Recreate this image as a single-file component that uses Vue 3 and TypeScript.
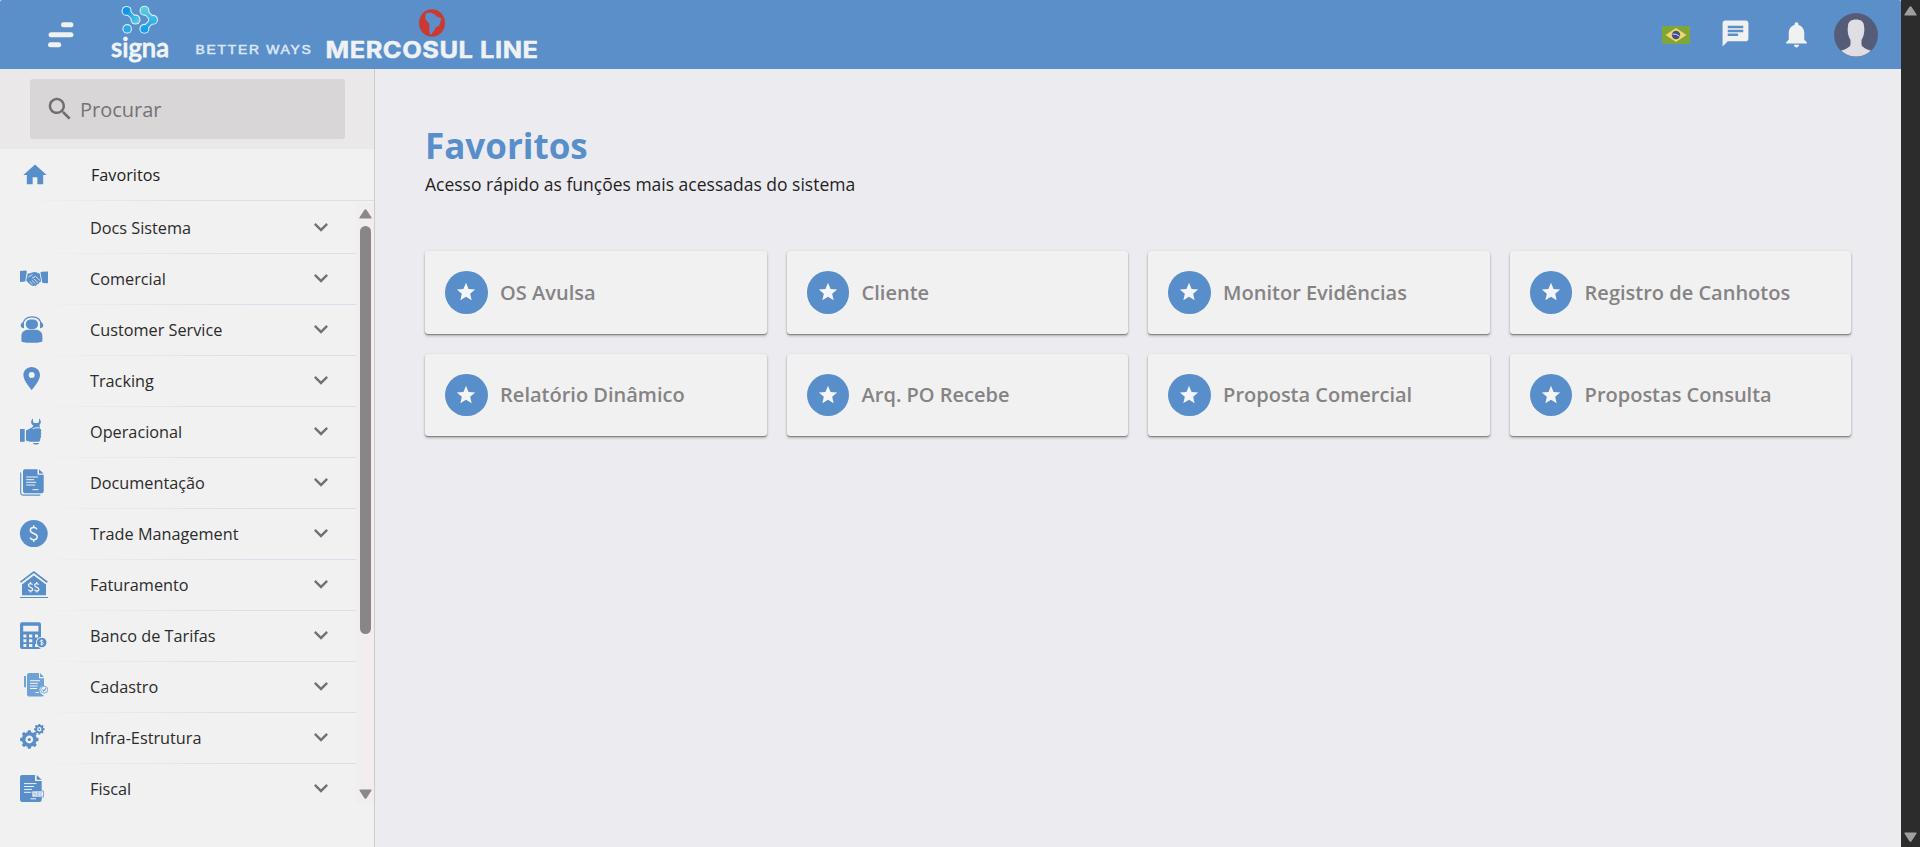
<script setup lang="ts">
interface MenuItem {
  id: string
  label: string
}

const menu: MenuItem[] = [
  { id: 'docs', label: 'Docs Sistema' },
  { id: 'comercial', label: 'Comercial' },
  { id: 'customer', label: 'Customer Service' },
  { id: 'tracking', label: 'Tracking' },
  { id: 'operacional', label: 'Operacional' },
  { id: 'documentacao', label: 'Documentação' },
  { id: 'trade', label: 'Trade Management' },
  { id: 'faturamento', label: 'Faturamento' },
  { id: 'banco', label: 'Banco de Tarifas' },
  { id: 'cadastro', label: 'Cadastro' },
  { id: 'infra', label: 'Infra-Estrutura' },
  { id: 'fiscal', label: 'Fiscal' },
]

const favorites: string[] = [
  'OS Avulsa',
  'Cliente',
  'Monitor Evidências',
  'Registro de Canhotos',
  'Relatório Dinâmico',
  'Arq. PO Recebe',
  'Proposta Comercial',
  'Propostas Consulta',
]

const bigTeeth: number[] = [0, 45, 90, 135, 180, 225, 270, 315]
</script>

<template>
  <div class="window">
    <div class="app">
      <header class="topbar">
        <svg class="burger" width="26" height="26" viewBox="0 0 26 26">
          <rect x="13" y="0.3" width="12.4" height="5" rx="2.5" />
          <rect x="0.6" y="10.3" width="24.8" height="5" rx="2.5" />
          <rect x="0" y="20.2" width="13.2" height="5" rx="2.5" />
        </svg>

        <svg class="brand" width="460" height="69" viewBox="100 0 460 69">
          <defs>
            <linearGradient id="dotA" gradientUnits="userSpaceOnUse" x1="124" y1="9" x2="138" y2="22">
              <stop offset="0.2" stop-color="#0f93ee" />
              <stop offset="1" stop-color="#5acbe0" />
            </linearGradient>
            <linearGradient id="dotB" gradientUnits="userSpaceOnUse" x1="148" y1="7" x2="148" y2="33">
              <stop offset="0.1" stop-color="#5ccbdc" />
              <stop offset="0.9" stop-color="#139bf0" />
            </linearGradient>
          </defs>
          <g fill="#d9ecfa">
            <circle cx="126.600" cy="10.900" r="5" />
            <circle cx="135.500" cy="19.600" r="5" />
            <circle cx="127.200" cy="28.900" r="4.800" />
            <circle cx="144.500" cy="10.700" r="5" />
            <circle cx="153" cy="19.800" r="5" />
            <circle cx="144.400" cy="28.800" r="5" />
            <path d="M126.600 10.900L135.500 19.600M144.500 10.700L153 19.800L144.400 28.800" fill="none" stroke="#d9ecfa" stroke-width="5.600" />
          </g>
          <g fill="url(#dotA)">
            <circle cx="126.600" cy="10.900" r="3.900" />
            <circle cx="135.500" cy="19.600" r="3.900" />
            <path d="M126.600 10.900L135.500 19.600" fill="none" stroke="url(#dotA)" stroke-width="3.600" />
          </g>
          <circle cx="127.200" cy="28.900" r="3.700" fill="#2ba8ea" />
          <g fill="url(#dotB)">
            <circle cx="144.500" cy="10.700" r="3.900" />
            <circle cx="153" cy="19.800" r="3.900" />
            <circle cx="144.400" cy="28.800" r="3.900" />
            <path d="M144.500 10.700L153 19.800L144.400 28.800" fill="none" stroke="url(#dotB)" stroke-width="3.600" />
          </g>
          <text class="signa" x="111" y="56.500" textLength="58" lengthAdjust="spacingAndGlyphs">signa</text>
          <text class="tagline" x="195.500" y="54.300" textLength="117" lengthAdjust="spacingAndGlyphs">BETTER WAYS</text>
          <ellipse cx="432" cy="23" rx="13" ry="13.800" fill="#cb3a32" />
          <path fill="#5a8fca" d="M425.800 13.400l4.200-.8 5 2 1.500 1.800 5 2-1.300 4.300-.9 2.800-3.500 1.900-1.700 3.200-3 3.800-1.200-.2-.6-4.400v-6l-3.700-4.200-.4-3.200z" />
          <text class="company" x="325.500" y="58.300" textLength="213" lengthAdjust="spacingAndGlyphs">MERCOSUL LINE</text>
        </svg>

        <div class="actions">
          <svg class="flag" width="28" height="18" viewBox="0 0 28 18">
            <rect width="28" height="18" fill="#7fa637" />
            <path d="M14 2l10.500 7L14 16 3.500 9z" fill="#f2d76a" />
            <circle cx="14" cy="9" r="4.200" fill="#434c8c" />
            <path d="M10.300 8q4.200-.4 7.300 2.300" fill="none" stroke="#d9dce8" stroke-width="1" />
          </svg>
          <svg class="chat" width="31" height="31" viewBox="0 0 24 24">
            <path fill="#f1f1f2" d="M20 2H4c-1.100 0-1.990.9-1.990 2L2 22l4-4h14c1.100 0 2-.9 2-2V4c0-1.100-.9-2-2-2zM6 9h12v2H6V9zm8 5H6v-2h8v2zm4-6H6V6h12v2z" />
          </svg>
          <svg class="bell" width="31" height="31" viewBox="0 0 24 24">
            <path fill="#f1f1f2" d="M12 22c1.100 0 2-.9 2-2h-4c0 1.100.89 2 2 2zm6-6v-5c0-3.070-1.640-5.640-4.500-6.320V4c0-.83-.67-1.500-1.500-1.500s-1.500.67-1.500 1.500v.68C7.630 5.360 6 7.920 6 11v5l-2 2v1h16v-1l-2-2z" />
          </svg>
          <svg class="avatar" width="44" height="44" viewBox="0 0 44 44">
            <defs>
              <clipPath id="face"><circle cx="22" cy="22" r="21.600" /></clipPath>
            </defs>
            <circle cx="22" cy="22" r="21.900" fill="#565b78" />
            <g clip-path="url(#face)" fill="#dfdfe3">
              <path d="M14 13c0-4.500 3.500-6.500 8-6.500s8 2 8 6.500c.8 4.500.3 9.500-2.500 14v4.500c.3 2.500 3.500 4.300 10.500 6.500v8H6v-8c7-2.200 10-4 10.500-6.500V27C13.700 22.500 13.200 17.500 14 13z" />
            </g>
          </svg>
        </div>
      </header>

      <div class="body">
        <aside class="sidebar">
          <div class="search-area">
            <div class="search">
              <svg width="30" height="30" viewBox="0 0 24 24">
                <path fill="#706e6f" d="M15.500 14h-.79l-.28-.27C15.410 12.590 16 11.110 16 9.500 16 5.910 13.090 3 9.500 3S3 5.910 3 9.500 5.910 16 9.500 16c1.610 0 3.090-.59 4.230-1.570l.27.28v.79l5 4.990L20.490 19l-4.990-5zm-6 0C7.010 14 5 11.990 5 9.500S7.010 5 9.500 5 14 7.010 14 9.500 11.990 14 9.500 14z" />
              </svg>
              <span>Procurar</span>
            </div>
          </div>

          <div class="home-row">
            <svg width="28" height="28" viewBox="0 0 24 24">
              <path fill="#588eca" d="M10 20v-6h4v6h5v-8h3L12 3 2 12h3v8z" />
            </svg>
            <span>Favoritos</span>
          </div>

          <div class="scroller">
            <nav class="list">
              <div v-for="item in menu" :key="item.id" class="item">
                <svg class="icon" width="28" height="28" viewBox="0 0 28 28" fill="#588eca">
                  <g v-if="item.id === 'comercial'">
                    <path d="M0 6l6-.5.8 1L5.200 16.600 0 17zM28 6.600l-6.400.2-1.200.8 2 10.300 5.600.3z" />
                    <path d="M7.700 8.600c2.200 0 3.700-1.400 6.300-1.700 2.700-.2 4 1.200 5.600 1.500l1.600 7.600c-.3 1.200-1 1.500-1.900 1.300 0 1.600-1.300 2.200-2.300 1.700-.2 1.600-1.600 2.100-2.700 1.500-1 1-2.300.6-3-.2L9 18.500l-2.800-3z" />
                    <path d="M8.200 12.200l4.300-2.800M12 13l3.400-1.700 5 4.500M13.700 13.800l4.500 4M11.800 15.200l3.800 3.700M9.800 16.600l2.900 2.700" fill="none" stroke="#f1f1f1" stroke-width=".8" />
                  </g>
                  <g v-else-if="item.id === 'customer'">
                    <rect x="5.800" y="3.400" width="12.200" height="9.800" rx="4.900" />
                    <path d="M1.400 27V20c0-4 3-6.300 7-6.300h7c4 0 7 2.300 7 6.300v5.200c-2 2.200-19 2.200-21 0z" />
                    <path d="M3 9C3 3.800 6.600.9 12 .9S21 3.800 21 9" fill="none" stroke="#588eca" stroke-width="1.200" />
                    <path d="M4 5.500v6.700c-4.400 0-4.500-5.300 0-6.700zM20 5.500v6.700c4.400 0 4.500-5.300 0-6.700z" />
                  </g>
                  <path v-else-if="item.id === 'tracking'" fill-rule="evenodd" d="M11.700 0C7 0 3.400 3.600 3.400 8.200c0 5.600 8.300 14.800 8.300 14.800S20 13.800 20 8.200C20 3.600 16.400 0 11.700 0zm0 4.900a3 3 0 1 1 0 6 3 3 0 0 1 0-6z" />
                  <g v-else-if="item.id === 'operacional'">
                    <rect x="0" y="11" width="4.700" height="12.800" />
                    <path d="M6 12.600l5.500-2.800c1-.6 1.600-1.400 2-2.300h6.500c-.2 1.200-.3 2-.2 2.900 1.800.6 1.900 2.700.8 3.500 1 1 .8 2.600-.1 3.200 1 1 .7 2.700-.3 3.300.4 1.800-.4 3.300-1.900 3.300H10L6 22.500z" />
                    <path d="M13 .4c-2.500 1.800-2.600 5.400.5 7.100v1.500h5V7.500c3.100-1.700 3-5.300.5-7.100v3.800l-1.700.9h-2.600L13 4.200z" />
                    <path d="M12.600 10.600c1 .5 1.800-.6 2.600-.8h4.300" fill="none" stroke="#f1f1f1" stroke-width="1" />
                    <path d="M13 25h6c-.4 2-5.600 2-6 0z" />
                  </g>
                  <g v-else-if="item.id === 'documentacao'">
                    <path d="M5 .3h12.500v5.500h6.200v16.400a2 2 0 0 1-2 2H5a2 2 0 0 1-2-2V2.300a2 2 0 0 1 2-2zM19 .3l4.500 4.200H19z" />
                    <path d="M.7 3.500v20.200a2.400 2.400 0 0 0 2.400 2.400h17.200" fill="none" stroke="#588eca" stroke-width="1.100" />
                    <path d="M6.200 8h12M6.200 10.700h8M6.200 13.300h10M6.200 16h9M12.500 20.700h6" stroke="#f1f1f1" stroke-width="1" />
                  </g>
                  <g v-else-if="item.id === 'trade'">
                    <ellipse cx="13.800" cy="13.600" rx="13.900" ry="13.500" />
                    <path d="M17 9.400c-.7-1.300-1.900-1.800-3.300-1.800-2 0-3.400 1.100-3.400 2.700 0 4 7 2.400 7 6.500 0 1.700-1.500 2.900-3.600 2.900-1.700 0-3-.7-3.700-2.100M13.700 5.300v2.600M13.700 19.300v2.600" fill="none" stroke="#f1f1f1" stroke-width="1.500" />
                  </g>
                  <g v-else-if="item.id === 'faturamento'">
                    <path d="M.5 11.200L13.800 1 27.300 11.200" fill="none" stroke="#588eca" stroke-width="1.700" />
                    <path d="M13.800 4.400L26 13.500v10.800H2V13.500zM0 26h28v1.100H0z" />
                    <g fill="none" stroke="#f1f1f1" stroke-width="1.300">
                      <path d="M12.500 13.800c-.4-.9-1.100-1.200-2-1.200-1.200 0-2 .7-2 1.700 0 2.500 4.200 1.500 4.200 4 0 1.100-.9 1.700-2.100 1.700-1.100 0-1.900-.5-2.200-1.400M10.500 11v2M10.500 19.800v1.800" />
                      <path d="M18.700 13.800c-.4-.9-1.100-1.200-2-1.200-1.200 0-2 .7-2 1.700 0 2.500 4.200 1.500 4.200 4 0 1.100-.9 1.700-2.100 1.700-1.100 0-1.900-.5-2.200-1.400M16.700 11v2M16.700 19.800v1.800" />
                    </g>
                  </g>
                  <g v-else-if="item.id === 'banco'">
                    <rect x="0" y=".3" width="21" height="26.700" rx="2" />
                    <path fill="#f1f1f1" d="M3.200 3.800h15.200v5.700H3.200zM3.400 12.500h3v3h-3zM9 12.500h3.300v3H9zM15 12.500h3v3h-3zM3.400 17.300h3v3h-3zM9 17.300h3.300v3H9zM3.400 22h3v3h-3zM9 22h3.300v3H9zM15 22h3v3h-3z" />
                    <circle cx="21.700" cy="20.500" r="5.700" fill="#f1f1f1" />
                    <circle cx="21.700" cy="20.500" r="4.800" />
                    <path d="M23.200 19c-.7-1-3-.9-3 .3 0 1.300 3.200.8 3.200 2.200 0 1.300-2.700 1.400-3.300.3M21.700 17.500v6" fill="none" stroke="#f1f1f1" stroke-width=".9" />
                  </g>
                  <g v-else-if="item.id === 'cadastro'" fill="#6fa2d6">
                    <path d="M9 0h10v5.300h5V13c-6 .5-6 7 0 9.800-.4.400-1 .6-1.500.6H9a2 2 0 0 1-2-2V2a2 2 0 0 1 2-2zM20 0l4 4h-4zM4 3h2v10.500l-1 1.500-1-1.500z" />
                    <path d="M10 7.700h10M10 10.300h8M10 13h7.500M10 15.500h7M15.500 19.500h3.500" stroke="#f1f1f1" stroke-width="1" />
                    <circle cx="24.200" cy="16.700" r="3.500" fill="#f1f1f1" stroke="#6fa2d6" stroke-width=".9" />
                    <path d="M22.500 16.700l1.300 1.300 2.300-2.600" fill="none" stroke="#6fa2d6" stroke-width="1.200" />
                  </g>
                  <g v-else-if="item.id === 'infra'">
                    <g transform="translate(9.300 15.500)">
                      <rect v-for="a in bigTeeth" :key="a" x="-1.700" y="-9.200" width="3.400" height="4" rx=".8" :transform="`rotate(${a})`" />
                      <circle r="5.700" fill="none" stroke="#588eca" stroke-width="3.600" />
                      <circle r="1.600" />
                    </g>
                    <g transform="translate(19.300 5.200)">
                      <rect v-for="a in bigTeeth" :key="a" x="-1" y="-5.300" width="2" height="2.500" rx=".5" :transform="`rotate(${a})`" />
                      <circle r="3.200" fill="none" stroke="#588eca" stroke-width="2" />
                      <circle r=".9" />
                    </g>
                  </g>
                  <g v-else-if="item.id === 'fiscal'">
                    <path d="M2 0h13v6h6.700v18.800a2.200 2.200 0 0 1-2.200 2.200H2.200A2.200 2.200 0 0 1 0 24.800V2a2 2 0 0 1 2-2zM16.700 0l5 4.700h-5z" />
                    <path d="M4 8.600h12.500M4 11.500h10M4 14.400h8M4 17.300h7.500M10.500 23.800H16" stroke="#f1f1f1" stroke-width="1" />
                    <rect x="12" y="16" width="11.600" height="6" fill="#f1f1f1" stroke="#588eca" stroke-width=".7" />
                    <path d="M14 20.500v-3l2 3v-3M17.500 20.500v-3h1.500v3zM22 17.700h-1.300v2.800H22" fill="none" stroke="#8db2dc" stroke-width=".7" />
                  </g>
                </svg>
                <span class="label">{{ item.label }}</span>
                <svg class="chevron" width="28" height="28" viewBox="0 0 24 24">
                  <path fill="#737273" d="M7.410 8.590L12 13.170l4.590-4.580L18 10l-6 6-6-6z" />
                </svg>
              </div>
            </nav>
            <div class="track">
              <svg width="13" height="10" viewBox="0 0 13 10"><path d="M1 9.500Q0 9.500.6 8.200L5.500.8q1-1.100 2 0l4.900 7.400q.6 1.300-.4 1.300z" fill="#8a8888" /></svg>
              <div class="thumb"></div>
              <svg width="13" height="10" viewBox="0 0 13 10"><path d="M1 .5Q0 .5.600 1.800l4.900 7.400q1 1.100 2 0l4.900-7.400Q13 .5 12 .5z" fill="#8a8888" /></svg>
            </div>
          </div>
        </aside>

        <main class="content">
          <h1>Favoritos</h1>
          <p>Acesso rápido as funções mais acessadas do sistema</p>
          <div class="grid">
            <div v-for="name in favorites" :key="name" class="card">
              <span class="badge">
                <svg width="22" height="22" viewBox="0 0 24 24">
                  <path fill="#f4f5f7" d="M12 17.270L18.180 21l-1.640-7.030L22 9.240l-7.190-.61L12 2 9.190 8.630 2 9.240l5.460 4.730L5.820 21z" />
                </svg>
              </span>
              <span class="name">{{ name }}</span>
            </div>
          </div>
        </main>
      </div>
    </div>

    <div class="page-scroll">
      <svg width="13" height="10" viewBox="0 0 13 10"><path d="M1 9.500Q0 9.500.6 8.200L5.500.8q1-1.100 2 0l4.900 7.400q.6 1.300-.4 1.300z" fill="#a09f9f" /></svg>
      <svg width="13" height="10" viewBox="0 0 13 10"><path d="M1 .5Q0 .5.600 1.800l4.900 7.400q1 1.100 2 0l4.900-7.400Q13 .5 12 .5z" fill="#a09f9f" /></svg>
    </div>
  </div>
</template>

<style>
body {
  margin: 0;
  overflow: hidden;
}
</style>

<style scoped>
.window {
  display: flex;
  width: 1920px;
  height: 847px;
  font-family: "Open Sans", "Noto Sans", sans-serif;
  background: #ecebef;
}
.window,
.window * {
  box-sizing: border-box;
}
svg {
  display: block;
  flex: none;
}
.app {
  width: 1901px;
  display: flex;
  flex-direction: column;
}
.topbar {
  height: 69px;
  display: flex;
  align-items: flex-start;
  background: #5a8fca;
  border-radius: 2px 2px 0 0;
}
.burger {
  margin: 21.700px 0 0 47.600px;
  fill: #f1f1f2;
}
.brand {
  margin-left: 26.400px;
}
.signa {
  font: 500 26px "Lato", sans-serif;
  fill: #f3f4f6;
  stroke: #f3f4f6;
  stroke-width: 0.9px;
}
.tagline {
  font: 400 12px "Liberation Sans", sans-serif;
  letter-spacing: 1.500px;
  fill: #dce7f4;
  stroke: #dce7f4;
  stroke-width: 0.5px;
}
.company {
  font: 700 23px "Inter", sans-serif;
  letter-spacing: 0.500px;
  fill: #eff1f5;
  stroke: #eff1f5;
  stroke-width: 0.5px;
}
.actions {
  margin-left: auto;
  margin-right: 23px;
  height: 69px;
  display: flex;
}
.flag {
  margin-top: 25.700px;
}
.chat {
  margin: 18.200px 0 0 30px;
}
.bell {
  margin: 18.500px 0 0 29.500px;
}
.avatar {
  margin: 12.500px 0 0 22.500px;
}
.body {
  flex: 1;
  display: flex;
  min-height: 0;
}
.sidebar {
  width: 375px;
  flex: none;
  background: #f1f1f1;
  border-right: 1px solid #cdcbd0;
}
.search-area {
  height: 80px;
  padding: 10px 29px 10px 30px;
  background: #eae8e9;
}
.search {
  height: 60px;
  display: flex;
  align-items: center;
  padding-left: 15px;
  border-radius: 3px;
  background: #d8d6d7;
  color: #757374;
  font-size: 20px;
}
.search span {
  margin-left: 5px;
}
.home-row {
  height: 52px;
  display: flex;
  align-items: center;
  padding-left: 21px;
  font-size: 16.200px;
  color: #212121;
  background: linear-gradient(90deg, rgba(216, 223, 236, 0) 20px, #d8dfec 200px) bottom / 100% 1px no-repeat;
}
.home-row span {
  margin-left: 42px;
}
.scroller {
  height: 602px;
  padding-top: 2px;
  display: flex;
}
.list {
  flex: 1;
  height: 600px;
  overflow: hidden;
}
.item {
  height: 51px;
  display: flex;
  align-items: center;
  padding: 0 21px 1px 20px;
  font-size: 16.250px;
  color: #2b2b2b;
  background: linear-gradient(90deg, rgba(219, 222, 234, 0) 30px, #dbdeea 250px) bottom / 100% 1px no-repeat;
}
.item:last-child {
  background: none;
}
.icon {
  overflow: visible;
}
.label {
  margin-left: 42px;
}
.chevron {
  margin-left: auto;
  margin-top: -3px;
}
.track {
  width: 18px;
  height: 601px;
  padding: 6px 0 5px 3px;
  display: flex;
  flex-direction: column;
  background: #f2edee;
}
.thumb {
  width: 11px;
  height: 408px;
  margin: 7px 0 auto 1px;
  border-radius: 6px;
  background: #888686;
}
.content {
  flex: 1;
  padding: 52px 50px 0;
}
h1 {
  margin: 0;
  font-size: 35px;
  line-height: 49px;
  font-weight: 700;
  color: #588eca;
}
p {
  margin: 0;
  font-size: 17.500px;
  line-height: 28px;
  color: #1f1f1f;
}
.grid {
  margin-top: 53px;
  display: grid;
  grid-template-columns: repeat(4, 1fr);
  gap: 20px;
}
.card {
  height: 82.600px;
  display: flex;
  align-items: center;
  padding-left: 20px;
  border-radius: 3px;
  background: #f1f1f1;
  box-shadow: 0 1px 1px rgba(0, 0, 0, 0.3), 0 2px 3px rgba(0, 0, 0, 0.24), 0 0 3px rgba(0, 0, 0, 0.06);
}
.badge {
  width: 42.600px;
  height: 42.600px;
  display: flex;
  align-items: center;
  justify-content: center;
  border-radius: 50%;
  background: #588eca;
}
.name {
  margin-left: 12.500px;
  font-size: 20px;
  font-weight: 600;
  color: #858384;
}
.page-scroll {
  width: 19px;
  padding: 6px 0 5px 3px;
  display: flex;
  flex-direction: column;
  justify-content: space-between;
  background: #2c2c2c;
}
</style>
